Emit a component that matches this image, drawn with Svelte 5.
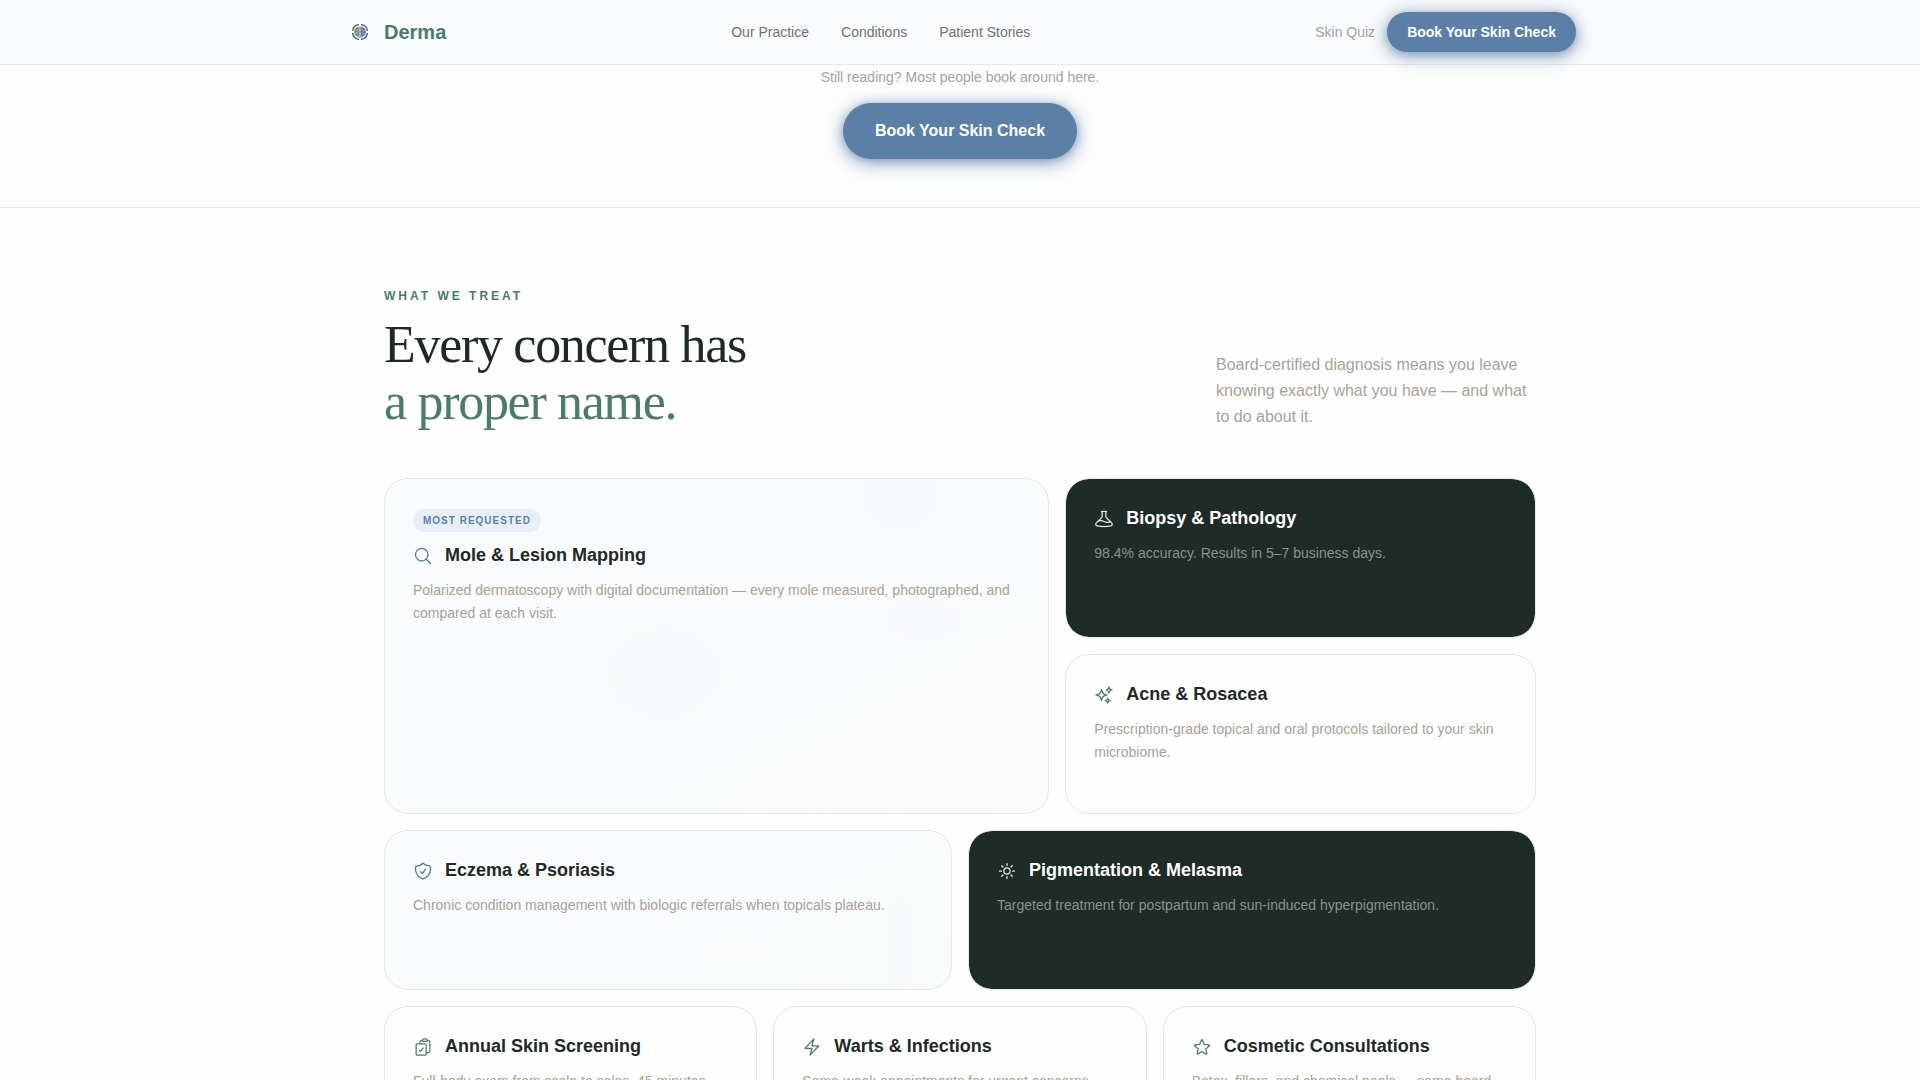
<script>
  const icons = {
    search: ['m21 21-5.197-5.197m0 0A7.5 7.5 0 1 0 5.196 5.196a7.5 7.5 0 0 0 10.607 10.607Z'],
    beaker: [
      'M9.75 3.104v5.714a2.25 2.25 0 0 1-.659 1.591L5 14.5M9.75 3.104c-.251.023-.501.05-.75.082m.75-.082a24.301 24.301 0 0 1 4.5 0m0 0v5.714c0 .597.237 1.17.659 1.591L19.8 15.3M14.25 3.104c.251.023.501.05.75.082M19.8 15.3l-1.57.393A9.065 9.065 0 0 1 12 15a9.065 9.065 0 0 0-6.23-.693L5 14.5m14.8.8 1.402 1.402c1.232 1.232.65 3.318-1.067 3.611A48.309 48.309 0 0 1 12 21c-2.773 0-5.491-.235-8.135-.687-1.718-.293-2.3-2.379-1.067-3.61L5 14.5'
    ],
    sparkles: [
      'M9.813 15.904 9 18.75l-.813-2.846a4.5 4.5 0 0 0-3.09-3.09L2.25 12l2.846-.813a4.5 4.5 0 0 0 3.09-3.09L9 5.25l.813 2.846a4.5 4.5 0 0 0 3.09 3.09L15.75 12l-2.846.813a4.5 4.5 0 0 0-3.09 3.09Z',
      'M18.259 8.715 18 9.75l-.259-1.035a3.375 3.375 0 0 0-2.455-2.456L14.25 6l1.036-.259a3.375 3.375 0 0 0 2.455-2.456L18 2.25l.259 1.035a3.375 3.375 0 0 0 2.456 2.456L21.75 6l-1.035.259a3.375 3.375 0 0 0-2.456 2.456Z',
      'M16.894 20.567 16.5 21.75l-.394-1.183a2.25 2.25 0 0 0-1.423-1.423L13.5 18.75l1.183-.394a2.25 2.25 0 0 0 1.423-1.423l.394-1.183.394 1.183a2.25 2.25 0 0 0 1.423 1.423l1.183.394-1.183.394a2.25 2.25 0 0 0-1.423 1.423Z'
    ],
    shield: [
      'M9 12.75 11.25 15 15 9.75m-3-7.036A11.959 11.959 0 0 1 3.598 6 11.99 11.99 0 0 0 3 9.749c0 5.592 3.824 10.29 9 11.623 5.176-1.332 9-6.03 9-11.622 0-1.31-.21-2.571-.598-3.751h-.152c-3.196 0-6.1-1.248-8.25-3.285Z'
    ],
    sun: [
      'M12 3v2.25m6.364.386-1.591 1.591M21 12h-2.25m-.386 6.364-1.591-1.591M12 18.75V21m-4.773-4.227-1.591 1.591M5.25 12H3m4.227-4.773L5.636 5.636M15.75 12a3.75 3.75 0 1 1-7.5 0 3.75 3.75 0 0 1 7.5 0Z'
    ],
    clipboard: [
      'M11.35 3.836c-.065.21-.1.433-.1.664 0 .414.336.75.75.75h4.5a.75.75 0 0 0 .75-.75 2.25 2.25 0 0 0-.1-.664m-5.8 0A2.251 2.251 0 0 1 13.5 2.25H15c1.012 0 1.867.668 2.15 1.586m-5.8 0c-.376.023-.75.05-1.124.08C9.095 4.01 8.25 4.973 8.25 6.108V8.25m8.9-4.414c.376.023.75.05 1.124.08 1.131.094 1.976 1.057 1.976 2.192V16.5A2.25 2.25 0 0 1 18 18.75h-2.25m-7.5-10.5H4.875c-.621 0-1.125.504-1.125 1.125v11.25c0 .621.504 1.125 1.125 1.125h9.75c.621 0 1.125-.504 1.125-1.125V18.75m-7.5-10.5h6.375c.621 0 1.125.504 1.125 1.125v9.375m-8.25-3 1.5 1.5 3-3.75'
    ],
    bolt: ['m3.75 13.5 10.5-11.25L12 10.5h8.25L9.75 21.75 12 13.5H3.75Z'],
    star: [
      'M11.48 3.499a.562.562 0 0 1 1.04 0l2.125 5.111a.563.563 0 0 0 .475.345l5.518.442c.499.04.701.663.321.988l-4.204 3.602a.563.563 0 0 0-.182.557l1.285 5.385a.562.562 0 0 1-.84.61l-4.725-2.885a.562.562 0 0 0-.586 0L6.982 20.54a.562.562 0 0 1-.84-.61l1.285-5.386a.562.562 0 0 0-.182-.557l-4.204-3.602a.562.562 0 0 1 .321-.988l5.518-.442a.563.563 0 0 0 .475-.345L11.48 3.5Z'
    ]
  };

  const cards = [
    { kind: 'feature tint', icon: 'search', badge: 'Most requested', title: 'Mole & Lesion Mapping', text: 'Polarized dermatoscopy with digital documentation — every mole measured, photographed, and compared at each visit.' },
    { kind: 'five dark', icon: 'beaker', title: 'Biopsy & Pathology', text: '98.4% accuracy. Results in 5–7 business days.' },
    { kind: 'five', icon: 'sparkles', title: 'Acne & Rosacea', text: 'Prescription-grade topical and oral protocols tailored to your skin microbiome.' },
    { kind: 'half tint', icon: 'shield', title: 'Eczema & Psoriasis', text: 'Chronic condition management with biologic referrals when topicals plateau.' },
    { kind: 'half dark', icon: 'sun', title: 'Pigmentation & Melasma', text: 'Targeted treatment for postpartum and sun-induced hyperpigmentation.' },
    { kind: 'third', icon: 'clipboard', title: 'Annual Skin Screening', text: 'Full-body exam from scalp to soles. 45 minutes.' },
    { kind: 'third', icon: 'bolt', title: 'Warts & Infections', text: 'Same-week appointments for urgent concerns.' },
    { kind: 'third', icon: 'star', title: 'Cosmetic Consultations', text: 'Botox, fillers, and chemical peels — same board-certified team.' }
  ];
</script>

<header>
  <div class="bar">
    <a class="brand" href="#top">
      <svg width="32" height="32" viewBox="0 0 32 32" fill="none" aria-hidden="true">
        <path d="M8.600 15a7.500 7.500 0 0 1 6.400-6.400M17 8.600a7.500 7.500 0 0 1 6.400 6.400" stroke="#4f7560" stroke-width="1.500" />
        <path d="M8.600 17a7.500 7.500 0 0 0 6.400 6.400M17 23.400a7.500 7.500 0 0 0 6.400-6.400" stroke="#4557a0" stroke-width="1.500" />
        <path d="M15.700 10.200a5.800 5.800 0 0 0 0 11.600Z" fill="#93a88c" />
        <path d="M16.300 10.200a5.800 5.800 0 0 1 0 11.600Z" fill="#8496bd" />
        <path d="M12 13.500c1.500-1.500 2.500 0 3.500-1M11 16c1.500-1.500 2.500 1 4.500 0M12.500 19c1-1.500 2 .5 3-.5" stroke="#557a58" stroke-width=".8" />
        <path d="M16.500 13c1-1.500 2 .8 3.500 0M16.500 16.200c1.500-1.500 2 1 4.500 0M16.500 19.200c1-1.200 1.500.5 3-.5" stroke="#40569a" stroke-width=".8" />
      </svg>
      <span>Derma</span>
    </a>
    <nav aria-label="Main">
      <a href="#practice">Our Practice</a>
      <a href="#conditions">Conditions</a>
      <a href="#stories">Patient Stories</a>
    </nav>
    <div class="actions">
      <a class="quiz" href="#quiz">Skin Quiz</a>
      <button type="button" class="cta small">Book Your Skin Check</button>
    </div>
  </div>
</header>

<main>
  <section class="prompt">
    <p>Still reading? Most people book around here.</p>
    <button type="button" class="cta large">Book Your Skin Check</button>
  </section>

  <section class="treat" id="conditions">
    <div class="intro">
      <div>
        <p class="eyebrow">What we treat</p>
        <h2>Every concern has<br /><span>a proper name.</span></h2>
      </div>
      <p class="lede">Board-certified diagnosis means you leave knowing exactly what you have — and what to do about it.</p>
    </div>

    <div class="grid">
      {#each cards as card}
        <article class="card {card.kind}">
          {#if card.badge}
            <div class="badges"><span class="badge">{card.badge}</span></div>
          {/if}
          <div class="title">
            <svg width="20" height="20" viewBox="0 0 24 24" aria-hidden="true">
              {#each icons[card.icon] as d}
                <path {d} />
              {/each}
            </svg>
            <h3>{card.title}</h3>
          </div>
          <p>{card.text}</p>
        </article>
      {/each}
    </div>
  </section>
</main>

<style>
  :global(body) {
    background: #fefefe;
    color: #1f2a26;
    font-family: "Liberation Sans", Arial, sans-serif;
    overflow-x: hidden;
  }

  h2, h3, p { margin: 0; }
  a { color: inherit; text-decoration: none; }

  header {
    position: sticky;
    top: 0;
    z-index: 10;
    background: #fafbfc;
    border-bottom: 1px solid #e5e8ea;
  }

  .bar {
    display: flex;
    align-items: center;
    justify-content: space-between;
    box-sizing: border-box;
    max-width: 1280px;
    height: 64px;
    margin: 0 auto;
    padding: 0 24px;
  }

  .brand {
    display: flex;
    align-items: center;
    gap: 8px;
    color: #4a7c6c;
    font-size: 20px;
    font-weight: 700;
  }

  nav {
    display: flex;
    gap: 32px;
    color: #6f726e;
    font-size: 14px;
  }

  .actions {
    display: flex;
    align-items: center;
    gap: 12px;
  }

  .quiz { color: #a3a3a0; font-size: 14px; }

  .cta {
    border: 0;
    border-radius: 999px;
    background: #5b7fa6;
    color: #fff;
    font-family: inherit;
    font-weight: 700;
    cursor: pointer;
    box-shadow:
      0 4px 20px rgba(91, 127, 166, 0.6),
      0 2px 10px rgba(91, 127, 166, 0.5);
  }

  .small { height: 40px; padding: 0 20px; font-size: 14px; }
  .large { height: 56px; padding: 0 32px; font-size: 16px; }

  .prompt {
    display: flex;
    flex-direction: column;
    align-items: center;
    gap: 16px;
    padding: 2px 24px 48px;
    border-bottom: 1px solid #e5e7e7;
    color: #a8a296;
    font-size: 14px;
    line-height: 20px;
  }

  .treat {
    box-sizing: border-box;
    max-width: 1280px;
    margin: 0 auto;
    padding: 80px 64px;
  }

  .intro {
    display: flex;
    align-items: flex-end;
    justify-content: space-between;
    margin-bottom: 48px;
  }

  .eyebrow {
    margin-bottom: 12px;
    color: #4a7c6c;
    font-size: 12px;
    font-weight: 700;
    line-height: 16px;
    letter-spacing: 0.25em;
    text-transform: uppercase;
  }

  h2 {
    font-family: "Liberation Serif", "Times New Roman", serif;
    font-size: 52px;
    font-weight: 400;
    line-height: 57px;
    letter-spacing: -0.025em;
  }

  h2 span { color: #4a7c6c; }

  .lede {
    max-width: 320px;
    color: #a8a296;
    font-size: 16px;
    line-height: 26px;
  }

  .grid {
    display: grid;
    grid-template-columns: repeat(12, 1fr);
    grid-auto-rows: minmax(160px, auto);
    gap: 16px;
  }

  .card {
    box-sizing: border-box;
    padding: 28px;
    border: 1px solid #e5e7e7;
    border-radius: 24px;
    background: #fefefe;
    background-clip: padding-box;
  }

  .feature { grid-column: span 7; grid-row: span 2; }
  .five { grid-column: span 5; }
  .half { grid-column: span 6; }
  .third { grid-column: span 4; }

  .tint {
    background: linear-gradient(150deg, #f9fbfc, #fafbfc 60%, #fafafa);
  }

  /* Faint shapes showing through the tinted cards */
  .feature.tint {
    background:
      radial-gradient(ellipse 64px 52px at 42% 58%, #f6f8f9 70%, transparent),
      radial-gradient(ellipse 44px 40px at 78% 5%, #f7f8fa 70%, transparent),
      radial-gradient(ellipse 48px 24px at 81% 42%, #f7f8fa 60%, transparent),
      radial-gradient(ellipse 90px 28px at 76% 88%, #fcfcfc 50%, transparent),
      linear-gradient(150deg, #f9fbfc, #fafbfc 60%, #fafafa);
  }

  .half.tint {
    background:
      radial-gradient(ellipse 16px 60px at 91% 70%, #f6f8f9 50%, transparent),
      radial-gradient(ellipse 30px 12px at 62% 74%, #fcfcfc 50%, transparent),
      linear-gradient(150deg, #f9fbfc, #fafbfc 50%, #f9fafa);
  }

  .dark {
    background-color: #1f2b27;
    color: #fff;
  }

  .badges {
    display: flex;
    padding-top: 2px;
    margin-bottom: 12px;
  }

  .badge {
    padding: 4px 10px;
    border-radius: 999px;
    background: #eaeff7;
    color: #5b7fa6;
    font-size: 10px;
    font-weight: 700;
    line-height: 15px;
    letter-spacing: 0.1em;
    text-transform: uppercase;
  }

  .title {
    display: flex;
    align-items: center;
    gap: 12px;
    margin-bottom: 12px;
  }

  .title svg {
    flex: none;
    fill: none;
    stroke: #4a7c6c;
    stroke-width: 1.5;
    stroke-linecap: round;
    stroke-linejoin: round;
  }

  .dark .title svg { stroke: #e4ece8; }

  h3 {
    font-size: 18px;
    font-weight: 700;
    line-height: 23px;
  }

  .card p {
    color: #a8a296;
    font-size: 14px;
    line-height: 23px;
  }

  .dark p { color: #8b918e; }
</style>
